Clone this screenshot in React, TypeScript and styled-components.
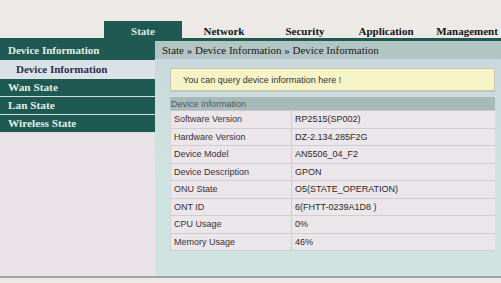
import { Fragment } from "react";
import styled, { createGlobalStyle } from "styled-components";

const GlobalStyle = createGlobalStyle`
  html, body {
    margin: 0;
    padding: 0;
    background: #ece9e7;
  }
  * {
    box-sizing: border-box;
  }
`;

const Page = styled.div`
  width: 501px;
  height: 283px;
  overflow: hidden;
  background: #ece9e7;
  font-family: "Liberation Serif", "Times New Roman", serif;
`;

const TabBar = styled.div`
  display: flex;
  gap: 3px;
  padding: 21px 0 0 104px;
  border-bottom: 3px solid #1f5a52;
`;

const Tab = styled.div<{ $active?: boolean }>`
  width: 78px;
  flex: none;
  height: 17px;
  line-height: 20px;
  text-align: center;
  font-weight: 700;
  font-size: 11px;
  white-space: nowrap;
  color: ${(p) => (p.$active ? "#dfe9e5" : "#141414")};
  background: ${(p) => (p.$active ? "#1f5a52" : "transparent")};
`;

const Body = styled.div`
  display: grid;
  grid-template-columns: 155px 1fr;
  height: 237px;
  border-bottom: 2px solid #a3a3a3;
`;

const Sidebar = styled.div`
  background: #e9e3e7;
  display: flex;
  flex-direction: column;
`;

const SideHeader = styled.div`
  height: 19px;
  line-height: 19px;
  padding-left: 8px;
  background: #1f5a52;
  color: #e4ece8;
  font-weight: 700;
  font-size: 11px;
`;

const SideSub = styled.div`
  height: 19px;
  line-height: 19px;
  padding-left: 16px;
  background: #dbe2e6;
  color: #2c2c4e;
  font-weight: 700;
  font-size: 11px;
`;

const SideItem = styled(SideHeader)`
  height: 18px;
  line-height: 17px;
  border-bottom: 1px solid #d3dde0;
  font-size: 11.3px;
`;

const Content = styled.div`
  background: linear-gradient(#c9d7dc, #cfe4e0 60%);
`;

const Crumb = styled.div`
  height: 18px;
  line-height: 19px;
  padding-left: 7px;
  background: #b2c5c3;
  color: #1a1a1a;
  font-size: 11px;
`;

const Inner = styled.div`
  padding: 9px 6px 0 15px;
  font-family: "Liberation Sans", Arial, sans-serif;
  font-size: 9px;
`;

const Notice = styled.div`
  height: 24px;
  line-height: 22px;
  padding-left: 12px;
  background: #f6f3c6;
  border: 1px solid #c4c5b4;
  border-bottom-width: 2px;
  color: #333;
  margin-bottom: 5px;
`;

const Table = styled.div`
  display: grid;
  grid-template-columns: 121px 1fr;
`;

const TableHead = styled.div`
  grid-column: 1 / -1;
  height: 14px;
  line-height: 14px;
  padding-left: 1px;
  background: #a8bab8;
  color: #4b5866;
  border-bottom: 1px solid #c3c7c9;
`;

const Cell = styled.div<{ $label?: boolean }>`
  height: 17.5px;
  line-height: 17px;
  padding-left: 3px;
  background: #eae6e9;
  color: ${(p) => (p.$label ? "#3a2f3a" : "#2a2a2a")};
  border-bottom: 1px solid #cfcdd1;
  border-left: 1px solid ${(p) => (p.$label ? "#d6d3d7" : "#cfcdd1")};
`;

const rows: [string, string][] = [
  ["Software Version", "RP2515(SP002)"],
  ["Hardware Version", "DZ-2.134.285F2G"],
  ["Device Model", "AN5506_04_F2"],
  ["Device Description", "GPON"],
  ["ONU State", "O5(STATE_OPERATION)"],
  ["ONT ID", "6(FHTT-0239A1D8 )"],
  ["CPU Usage", "0%"],
  ["Memory Usage", "46%"],
];

const tabs = ["State", "Network", "Security", "Application", "Management"];

export default function App() {
  return (
    <Page>
      <GlobalStyle />
      <TabBar>
        {tabs.map((t) => (
          <Tab key={t} $active={t === "State"}>
            {t}
          </Tab>
        ))}
      </TabBar>
      <Body>
        <Sidebar>
          <SideHeader>Device Information</SideHeader>
          <SideSub>Device Information</SideSub>
          <SideItem>Wan State</SideItem>
          <SideItem>Lan State</SideItem>
          <SideItem>Wireless State</SideItem>
        </Sidebar>
        <Content>
          <Crumb>State » Device Information » Device Information</Crumb>
          <Inner>
            <Notice>You can query device information here !</Notice>
            <Table>
              <TableHead>Device Information</TableHead>
              {rows.map(([label, value]) => (
                <Fragment key={label}>
                  <Cell $label>{label}</Cell>
                  <Cell>{value}</Cell>
                </Fragment>
              ))}
            </Table>
          </Inner>
        </Content>
      </Body>
    </Page>
  );
}
